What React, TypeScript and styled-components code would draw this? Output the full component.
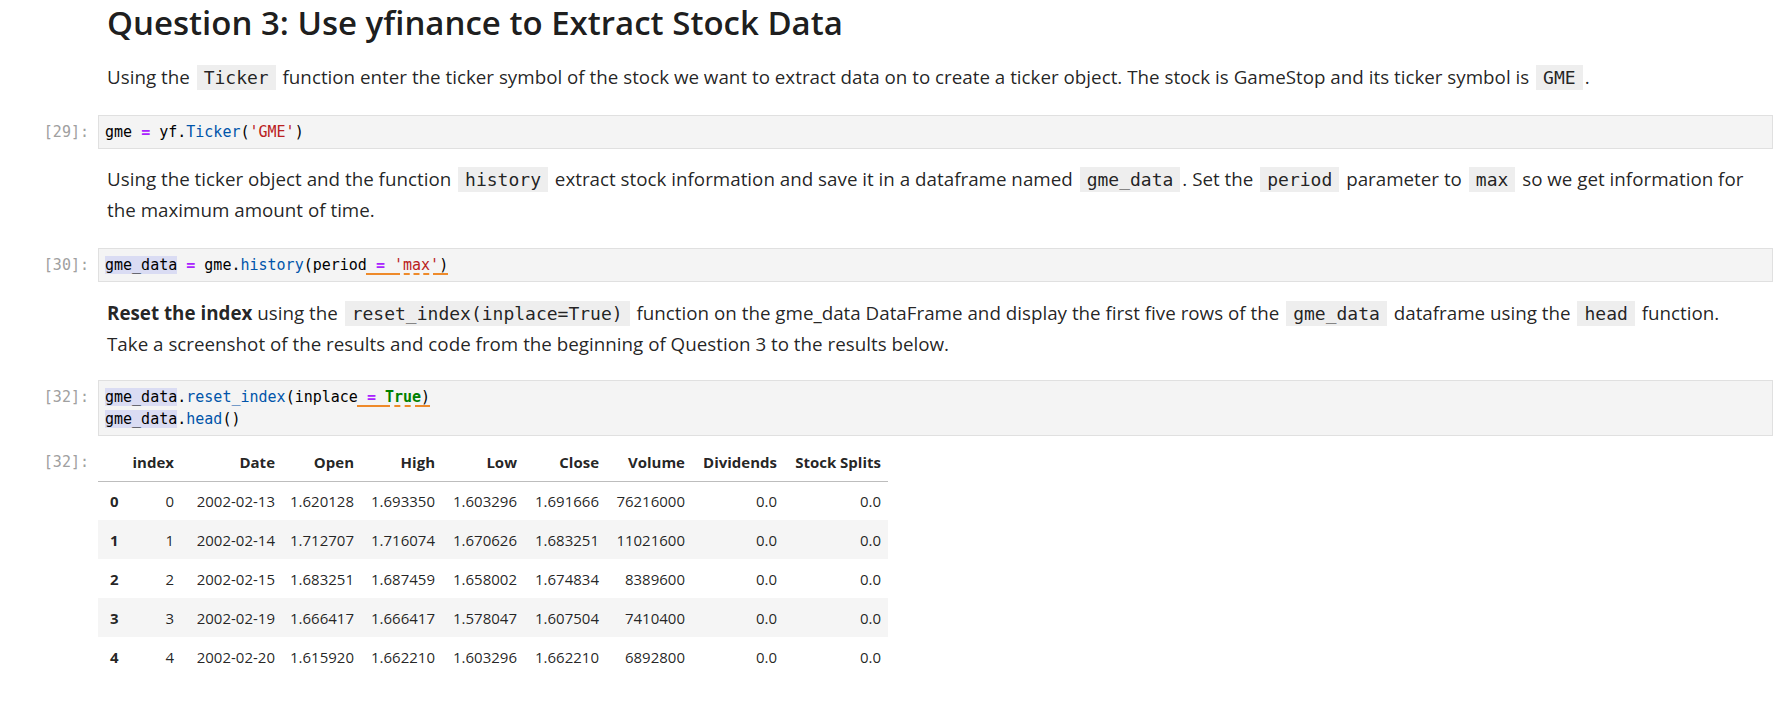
import React from "react";
import styled, { createGlobalStyle } from "styled-components";

const Global = createGlobalStyle`
  html, body { margin: 0; padding: 0; background: #ffffff; }
  body {
    font-family: "Open Sans", "Noto Sans", sans-serif;
    color: rgba(0, 0, 0, 0.87);
  }
`;

const Notebook = styled.div`
  width: 1792px;
  height: 702px;
  overflow: hidden;
  display: flex;
  flex-direction: column;
`;

const Cell = styled.div<{ $mt: number }>`
  display: flex;
  align-items: flex-start;
  margin-top: ${(p) => p.$mt}px;
`;

const Prompt = styled.div<{ $pt?: number }>`
  width: 98px;
  flex: none;
  box-sizing: border-box;
  padding-right: 9px;
  padding-top: ${(p) => p.$pt ?? 0}px;
  text-align: right;
  font-family: "DejaVu Sans Mono", monospace;
  font-size: 15px;
  line-height: 22px;
  color: #a0a0a0;
`;

const Markdown = styled.div`
  width: 1666px;
  padding-left: 9px;
  font-size: 18.8px;
  line-height: 30px;
  white-space: nowrap;
`;

const Heading = styled.h2`
  margin: 0;
  font-size: 33px;
  line-height: 45px;
  font-weight: 600;
  color: rgba(0, 0, 0, 0.9);
`;

const Para = styled.p`
  margin: 0;
`;

const InlineCode = styled.code`
  font-family: "DejaVu Sans Mono", monospace;
  font-size: 18px;
  background: #eeeeee;
  padding: 2px 7px;
  margin: 0 2px;
  color: rgba(0, 0, 0, 0.87);
`;

const CodeBox = styled.div`
  width: 1675px;
  box-sizing: border-box;
  background: #f4f4f4;
  border: 1px solid #e0e0e0;
  padding: 5px 6px;
  font-family: "DejaVu Sans Mono", monospace;
  font-size: 15px;
  line-height: 22px;
  color: #000;
  white-space: pre;
`;

const Line = styled.div``;

const Op = styled.span`
  color: #aa22ff;
  font-weight: bold;
`;

const Fn = styled.span`
  color: #0055aa;
`;

const Str = styled.span`
  color: #ba2121;
`;

const Kw = styled.span`
  color: #008000;
  font-weight: bold;
`;

const Match = styled.span`
  background: #dadcf3;
`;

const Lint = styled.span`
  text-decoration: underline dashed #ee8a2a;
  text-decoration-thickness: 2px;
  text-underline-offset: 3px;
`;

const OutputArea = styled.div`
  padding-left: 0;
`;

const Table = styled.table`
  border-collapse: collapse;
  border-spacing: 0;
  font-size: 15px;
  color: rgba(0, 0, 0, 0.87);
  table-layout: fixed;
  width: 790px;
`;

const Col = styled.col<{ $w: number }>`
  width: ${(p) => p.$w}px;
`;

const HeadRow = styled.tr`
  height: 38px;
  border-bottom: 1px solid #bdbdbd;
`;

const BodyRow = styled.tr<{ $striped: boolean }>`
  height: 39px;
  background: ${(p) => (p.$striped ? "#f5f5f5" : "transparent")};
`;

const Th = styled.th`
  text-align: right;
  font-weight: bold;
  padding: 0 7px 0 0;
  white-space: nowrap;
`;

const RowLabel = styled.th`
  text-align: left;
  font-weight: bold;
  padding: 0 0 0 12px;
`;

const Td = styled.td`
  text-align: right;
  padding: 0 7px 0 0;
  white-space: nowrap;
`;

const columns = ["index", "Date", "Open", "High", "Low", "Close", "Volume", "Dividends", "Stock Splits"];
const widths = [30, 53, 101, 79, 81, 82, 82, 86, 92, 104];

const rows = [
  ["0", "2002-02-13", "1.620128", "1.693350", "1.603296", "1.691666", "76216000", "0.0", "0.0"],
  ["1", "2002-02-14", "1.712707", "1.716074", "1.670626", "1.683251", "11021600", "0.0", "0.0"],
  ["2", "2002-02-15", "1.683251", "1.687459", "1.658002", "1.674834", "8389600", "0.0", "0.0"],
  ["3", "2002-02-19", "1.666417", "1.666417", "1.578047", "1.607504", "7410400", "0.0", "0.0"],
  ["4", "2002-02-20", "1.615920", "1.662210", "1.603296", "1.662210", "6892800", "0.0", "0.0"],
];

export default function App() {
  return (
    <>
      <Global />
      <Notebook>
        <Cell $mt={0}>
          <Prompt />
          <Markdown>
            <Heading>Question 3: Use yfinance to Extract Stock Data</Heading>
          </Markdown>
        </Cell>

        <Cell $mt={17}>
          <Prompt />
          <Markdown>
            <Para>
              Using the <InlineCode>Ticker</InlineCode> function enter the ticker symbol of the stock we want to
              extract data on to create a ticker object. The stock is GameStop and its ticker symbol is{" "}
              <InlineCode>GME</InlineCode>.
            </Para>
          </Markdown>
        </Cell>

        <Cell $mt={22}>
          <Prompt $pt={6}>[29]:</Prompt>
          <CodeBox>
            <Line>
              gme <Op>=</Op> yf.<Fn>Ticker</Fn>(<Str>'GME'</Str>)
            </Line>
          </CodeBox>
        </Cell>

        <Cell $mt={15}>
          <Prompt />
          <Markdown>
            <Para>
              Using the ticker object and the function <InlineCode>history</InlineCode> extract stock information
              and save it in a dataframe named <InlineCode>gme_data</InlineCode>. Set the{" "}
              <InlineCode>period</InlineCode> parameter to <InlineCode>max</InlineCode> so we get information for
              <br />
              the maximum amount of time.
            </Para>
          </Markdown>
        </Cell>

        <Cell $mt={23}>
          <Prompt $pt={6}>[30]:</Prompt>
          <CodeBox>
            <Line>
              <Match>gme_data</Match> <Op>=</Op> gme.<Fn>history</Fn>(period
              <Lint>
                {" "}
                <Op>=</Op> <Str>'max'</Str>)
              </Lint>
            </Line>
          </CodeBox>
        </Cell>

        <Cell $mt={16}>
          <Prompt />
          <Markdown>
            <Para>
              <b>Reset the index</b> using the <InlineCode>reset_index(inplace=True)</InlineCode> function on the
              gme_data DataFrame and display the first five rows of the <InlineCode>gme_data</InlineCode> dataframe
              using the <InlineCode>head</InlineCode> function.
              <br />
              Take a screenshot of the results and code from the beginning of Question 3 to the results below.
            </Para>
          </Markdown>
        </Cell>

        <Cell $mt={21}>
          <Prompt $pt={6}>[32]:</Prompt>
          <CodeBox>
            <Line>
              <Match>gme_data</Match>.<Fn>reset_index</Fn>(inplace
              <Lint>
                {" "}
                <Op>=</Op> <Kw>True</Kw>)
              </Lint>
            </Line>
            <Line>
              <Match>gme_data</Match>.<Fn>head</Fn>()
            </Line>
          </CodeBox>
        </Cell>

        <Cell $mt={7}>
          <Prompt $pt={8}>[32]:</Prompt>
          <OutputArea>
            <Table>
              <colgroup>
                {widths.map((w, i) => (
                  <Col key={i} $w={w} />
                ))}
              </colgroup>
              <thead>
                <HeadRow>
                  <Th />
                  {columns.map((c) => (
                    <Th key={c}>{c}</Th>
                  ))}
                </HeadRow>
              </thead>
              <tbody>
                {rows.map((r, i) => (
                  <BodyRow key={i} $striped={i % 2 === 1}>
                    <RowLabel>{i}</RowLabel>
                    {r.map((v, j) => (
                      <Td key={j}>{v}</Td>
                    ))}
                  </BodyRow>
                ))}
              </tbody>
            </Table>
          </OutputArea>
        </Cell>
      </Notebook>
    </>
  );
}
